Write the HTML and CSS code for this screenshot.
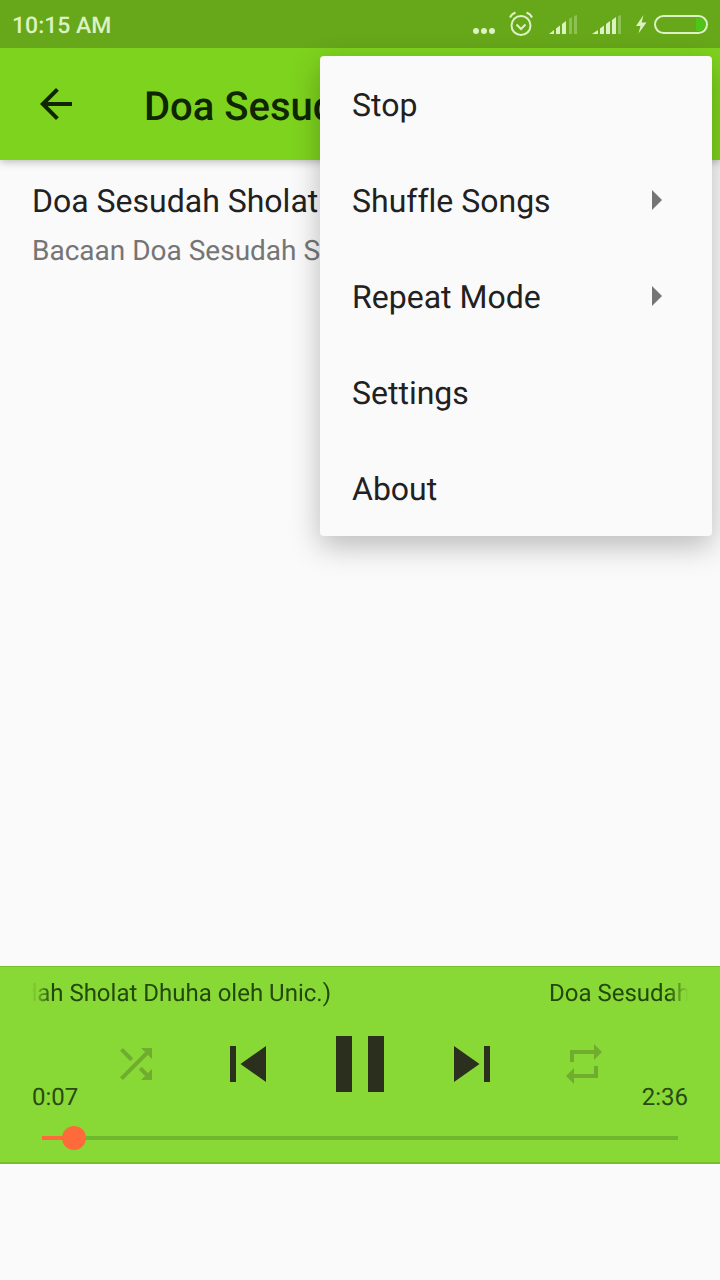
FILE: index.html
```html
<!DOCTYPE html>
<html lang="id">
<head>
<meta charset="utf-8">
<title>Doa Sesudah Sholat Dhuha</title>
<link rel="stylesheet" href="styles.css">
</head>
<body>
<div class="screen">
  <header class="topbars">
    <div class="statusbar">
      <span class="clock">10:15 AM</span>
      <svg class="status-icons" width="236" height="48" viewBox="472 0 236 48" aria-hidden="true">
        <g class="st-fill">
          <circle cx="476" cy="31" r="3"/><circle cx="484" cy="31" r="3"/><circle cx="492" cy="31" r="3"/>
        </g>
        <g class="st-line">
          <circle cx="521" cy="25.5" r="9.5"/>
          <path d="M516.5 24.5l4.5 4.5 4.500-4.500"/>
          <path d="M510 17.500q1.500-3.500 5.500-5M532 17.500q-1.500-3.500-5.500-5"/>
        </g>
        <g class="st-fill">
          <path d="M549 34l5-4v4zM556 28.500l4-3V34h-4zM562 24l4-3v13h-4z"/>
        </g>
        <g class="st-dim">
          <path d="M569 19l3-2v17h-3zM574 16l3-1v19h-3z"/>
        </g>
        <g class="st-fill">
          <path d="M592 34l6-4v4zM600 28.500l4-3V34h-4zM606 24l4-3v13h-4zM612 20l4-3v17h-4z"/>
        </g>
        <g class="st-dim"><path d="M618 16l3-1v19h-3z"/></g>
        <path class="st-fill" d="M643.500 15l-7.500 11h4.500l-2 7.500 8-11h-4.800z"/>
        <rect class="st-line" x="655" y="16" width="52" height="17" rx="8.500"/>
        <path class="st-charge" d="M696 18h3a6.500 6.500 0 0 1 0 13h-3z"/>
      </svg>
    </div>
    <div class="appbar">
      <svg class="back" width="48" height="48" viewBox="0 0 24 24" aria-hidden="true"><path d="M20 11H7.830l5.590-5.590L12 4l-8 8 8 8 1.410-1.410L7.830 13H20v-2z"/></svg>
      <h1 class="title">Doa Sesudah Sholat Dhuha</h1>
    </div>
  </header>

  <main class="content">
    <div class="item-title">Doa Sesudah Sholat Dhuha</div>
    <div class="item-sub">Bacaan Doa Sesudah Sholat Dhuha</div>
  </main>

  <section class="player">
    <div class="marquee">
      <div class="marquee-left"><span>Bacaan Doa Sesudah Sholat Dhuha oleh Unic.)</span></div>
      <span class="marquee-right">Doa Sesudah Sholat Dhuha</span>
    </div>
    <div class="stage">
      <div class="controls">
        <svg class="ctl-faded" width="48" height="48" viewBox="0 0 24 24" aria-hidden="true"><path d="M10.590 9.170L5.410 4 4 5.410l5.170 5.170 1.420-1.410zM14.500 4l2.040 2.040L4 18.590 5.410 20 17.960 7.460 20 9.500V4h-5.500zm.33 9.410l-1.410 1.410 3.130 3.130L14.500 20H20v-5.500l-2.040 2.040-3.130-3.130z"/></svg>
        <svg class="ctl" width="72" height="72" viewBox="0 0 24 24" aria-hidden="true"><path d="M6 6h2v12H6zm3.500 6l8.500 6V6z"/></svg>
        <svg class="ctl" width="96" height="96" viewBox="0 0 24 24" aria-hidden="true"><path d="M6 19h4V5H6v14zm8-14v14h4V5h-4z"/></svg>
        <svg class="ctl" width="72" height="72" viewBox="0 0 24 24" aria-hidden="true"><path d="M6 18l8.500-6L6 6v12zM16 6v12h2V6h-2z"/></svg>
        <svg class="ctl-faded" width="48" height="48" viewBox="0 0 24 24" aria-hidden="true"><path d="M7 7h10v3l4-4-4-4v3H5v6h2V7zm10 10H7v-3l-4 4 4 4v-3h12v-6h-2v4z"/></svg>
      </div>
      <div class="times"><span>0:07</span><span>2:36</span></div>
    </div>
    <div class="seek">
      <div class="track"><div class="track-done"></div><div class="thumb"></div></div>
    </div>
  </section>
  <div class="below"></div>

  <nav class="menu">
    <div class="menu-item">Stop</div>
    <div class="menu-item">Shuffle Songs<svg width="10" height="20" viewBox="0 0 10 20" aria-hidden="true"><path d="M0 0l10 10L0 20z"/></svg></div>
    <div class="menu-item">Repeat Mode<svg width="10" height="20" viewBox="0 0 10 20" aria-hidden="true"><path d="M0 0l10 10L0 20z"/></svg></div>
    <div class="menu-item">Settings</div>
    <div class="menu-item">About</div>
  </nav>
</div>
</body>
</html>
```
FILE: styles.css
```css
* { box-sizing: border-box; }
html, body { margin: 0; padding: 0; }
body {
  font-family: Roboto, "Noto Sans", sans-serif;
  background: #fafafa;
  text-rendering: geometricPrecision;
  font-variant-ligatures: none;
}
.screen {
  position: relative;
  width: 720px;
  height: 1280px;
  overflow: hidden;
  display: flex;
  flex-direction: column;
  background: #fafafa;
}
.topbars { box-shadow: 0 2px 8px rgba(0,0,0,.25); position: relative; z-index: 1; }
.statusbar {
  height: 48px;
  background: #67a71a;
  display: flex;
  align-items: center;
  justify-content: space-between;
  padding: 0 12px;
}
.clock { font-size: 23px; font-weight: 500; color: #dcf2c4; padding-top: 2px; }
.status-icons { display: block; }
.st-fill { fill: #dcf2c4; }
.st-dim { fill: #8ec154; }
.st-line { fill: none; stroke: #dcf2c4; stroke-width: 2; }
.st-charge { fill: #4fc51a; }
.appbar {
  height: 112px;
  background: #7ed31e;
  display: flex;
  align-items: center;
  padding-left: 32px;
  gap: 64px;
}
.back { fill: #0f2600; flex: none; }
.title { margin: 0; padding-top: 4px; font-size: 40px; font-weight: 500; color: #0f2600; white-space: nowrap; }
.content { flex: 1; padding: 21px 32px 0; }
.item-title { font-size: 32px; line-height: 40px; color: #212121; white-space: nowrap; }
.item-sub { margin-top: 10px; font-size: 28px; line-height: 40px; color: #757575; white-space: nowrap; }
.player {
  height: 198px;
  background: #88d836;
  border-top: 1px solid #76bf2c;
  border-bottom: 2px solid #76bf2c;
  display: flex;
  flex-direction: column;
}
.marquee {
  height: 49px;
  padding-top: 3px;
  margin: 0 32px;
  display: flex;
  align-items: center;
  gap: 218px;
  overflow: hidden;
  font-size: 24px;
  color: #23480c;
  white-space: nowrap;
  -webkit-mask-image: linear-gradient(90deg, transparent 0, #000 20px, #000 636px, transparent 656px);
  mask-image: linear-gradient(90deg, transparent 0, #000 20px, #000 636px, transparent 656px);
}
.marquee-left { flex: 0 0 299px; display: flex; justify-content: flex-end; overflow: hidden; }
.marquee-left span { flex: none; }
.marquee-right { flex: none; }
.stage { height: 96px; display: grid; }
.controls, .times { grid-area: 1 / 1; }
.controls {
  display: grid;
  grid-template-columns: repeat(5, 112px);
  justify-content: center;
  justify-items: center;
  align-items: center;
}
.ctl { fill: #2a2f1e; display: block; }
.ctl-faded { fill: #2a2f1e; opacity: .25; display: block; }
.times {
  align-self: end;
  display: flex;
  justify-content: space-between;
  padding: 0 32px 1px;
  font-size: 24px;
  line-height: 28px;
  color: #2a4a12;
}
.seek { flex: 1; display: flex; align-items: center; padding: 2px 42px 0; }
.track { position: relative; width: 100%; height: 4px; background: #6fb82e; }
.track-done { width: 32px; height: 4px; background: #ff6a3a; }
.thumb {
  position: absolute;
  left: 20px;
  top: -10px;
  width: 24px;
  height: 24px;
  border-radius: 50%;
  background: #ff6a3a;
}
.below { height: 116px; background: #fafafa; }
.menu {
  position: absolute;
  z-index: 2;
  left: 320px;
  top: 56px;
  width: 392px;
  background: #fafafa;
  border-radius: 4px;
  box-shadow: 0 10px 30px rgba(0,0,0,.26);
}
.menu-item {
  height: 96px;
  padding: 2px 50px 0 32px;
  display: flex;
  align-items: center;
  justify-content: space-between;
  font-size: 32px;
  color: #212121;
}
.menu-item svg { fill: #757575; flex: none; margin-top: -2px; }
```
